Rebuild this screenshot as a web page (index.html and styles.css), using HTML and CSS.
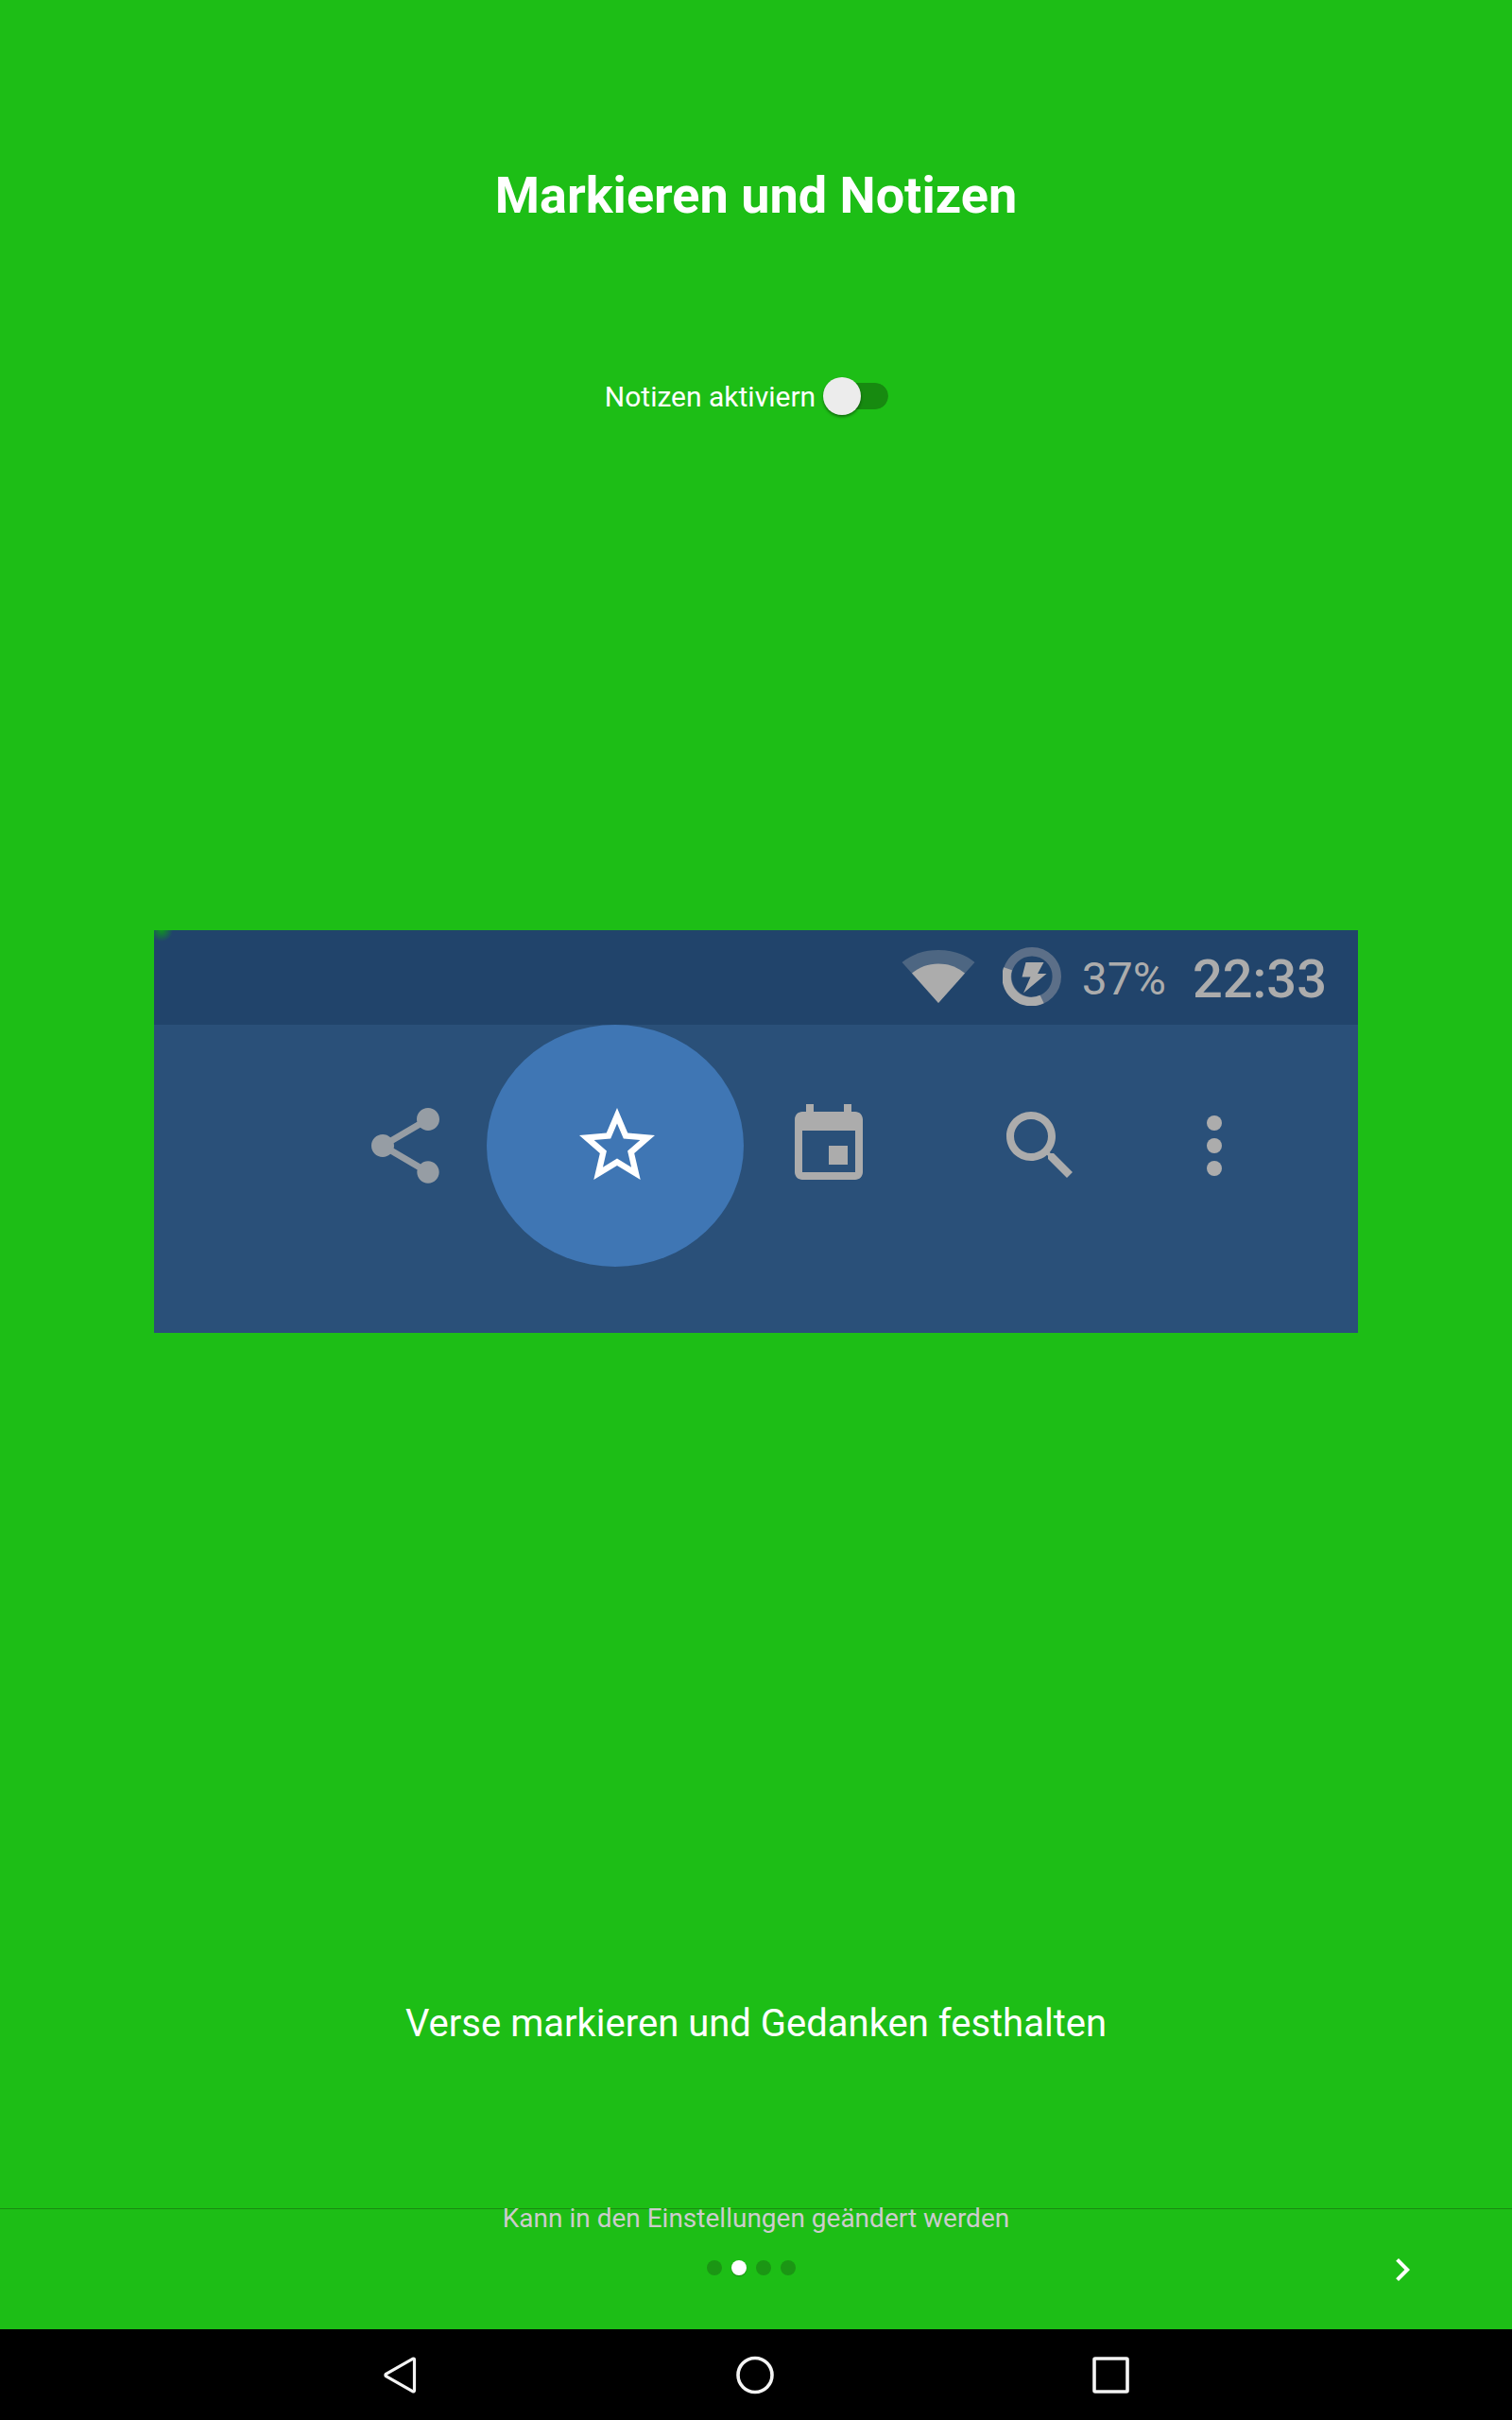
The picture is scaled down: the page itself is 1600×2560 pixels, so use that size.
FILE: index.html
```html
<!DOCTYPE html>
<html lang="de">
<head>
<meta charset="utf-8">
<meta name="viewport" content="width=device-width, initial-scale=1">
<title>Markieren und Notizen</title>
<link rel="stylesheet" href="styles.css">
</head>
<body>
<main class="slide">
  <h1 class="title">Markieren und Notizen</h1>
  <label class="toggle" for="notes">
    <span class="toggle-text">Notizen aktiviern</span>
    <input class="switch" id="notes" type="checkbox" role="switch">
  </label>
  <div class="stage">
    <section class="preview" aria-label="Vorschau">
      <div class="status">
        <svg class="wifi" width="78" height="58" viewBox="0 0 78 58" aria-hidden="true">
          <path fill="#4d6682" d="M39 57 .5 14C11 5.500 24 1 39 1s28 4.500 38.500 13z"/>
          <path fill="#acacac" d="M39 57 11 25.500C19 19 28 15.500 39 15.500S59 19 67 25.500z"/>
        </svg>
        <svg class="battery" width="62" height="62" viewBox="0 0 62 62" aria-hidden="true">
          <circle cx="31" cy="31" r="26.300" fill="none" stroke="#5c6f88" stroke-width="9.400"/>
          <path fill="none" stroke="#acacac" stroke-width="9.400" d="M5.500 22.800A26.300 26.300 0 0 0 41.600 55.100"/>
          <path fill="#acacac" d="M24.500 16H43.500L37 28H46.500L22 48.500 29.500 31.500H20.500z"/>
        </svg>
        <span class="percent">37%</span>
        <span class="clock">22:33</span>
      </div>
      <div class="toolbar">
        <svg class="icon share" viewBox="0 0 24 24" aria-hidden="true"><path d="M18 16.080c-.76 0-1.440.3-1.960.77L8.910 12.700c.05-.23.09-.46.09-.7s-.04-.47-.09-.7l7.050-4.110c.54.5 1.250.81 2.040.81 1.660 0 3-1.340 3-3s-1.340-3-3-3-3 1.340-3 3c0 .24.04.47.09.7L8.040 9.810C7.500 9.310 6.790 9 6 9c-1.660 0-3 1.340-3 3s1.340 3 3 3c.79 0 1.500-.31 2.040-.81l7.120 4.160c-.05.21-.08.43-.08.65 0 1.610 1.310 2.920 2.920 2.920s2.920-1.310 2.920-2.920-1.310-2.920-2.920-2.920z"/></svg>
        <span class="spot">
          <svg class="icon star" viewBox="0 0 24 24" aria-hidden="true"><path d="M22 9.240l-7.190-.62L12 2 9.190 8.630 2 9.240l5.460 4.730L5.820 21 12 17.270 18.180 21l-1.630-7.030L22 9.240zM12 15.400l-3.760 2.270 1-4.280-3.320-2.880 4.380-.38L12 6.100l1.710 4.040 4.380.38-3.320 2.880 1 4.280L12 15.400z"/></svg>
        </span>
        <svg class="icon" viewBox="0 0 24 24" aria-hidden="true"><path d="M17 12h-5v5h5v-5zM16 1v2H8V1H6v2H5c-1.110 0-1.990.9-1.990 2L3 19c0 1.100.89 2 2 2h14c1.100 0 2-.9 2-2V5c0-1.100-.9-2-2-2h-1V1h-2zm3 18H5V8h14v11z"/></svg>
        <svg class="icon" viewBox="0 0 24 24" aria-hidden="true"><path d="M15.500 14h-.79l-.28-.27C15.410 12.590 16 11.110 16 9.500 16 5.910 13.090 3 9.500 3S3 5.910 3 9.500 5.910 16 9.500 16c1.610 0 3.090-.59 4.230-1.570l.27.28v.79l5 4.990L20.490 19l-4.990-5zm-6 0C7.010 14 5 11.990 5 9.500S7.010 5 9.500 5 14 7.010 14 9.500 11.990 14 9.500 14z"/></svg>
        <svg class="icon more" viewBox="0 0 24 24" aria-hidden="true"><circle cx="12" cy="6" r="2"/><circle cx="12" cy="12" r="2"/><circle cx="12" cy="18" r="2"/></svg>
      </div>
    </section>
  </div>
  <p class="lead">Verse markieren und Gedanken festhalten</p>
</main>
<footer class="pager">
  <p class="note">Kann in den Einstellungen geändert werden</p>
  <div class="controls">
    <span class="dots"><i class="dot"></i><i class="dot current"></i><i class="dot"></i><i class="dot"></i></span>
    <button class="next" type="button" aria-label="Weiter"><svg width="48" height="48" viewBox="0 0 24 24" aria-hidden="true"><path fill="#fff" d="M10 6 8.590 7.410 13.170 12l-4.580 4.590L10 18l6-6z"/></svg></button>
  </div>
</footer>
<nav class="system" aria-label="System">
  <button type="button" aria-label="Zurück"><svg width="48" height="48" viewBox="0 0 48 48"><path stroke-width="3.200" d="M38.500 8v33a1 1 0 0 1-1.500.8L8.500 25.700a1.500 1.500 0 0 1 0-2.400L37 7.200a1 1 0 0 1 1.500.8z"/></svg></button>
  <button type="button" aria-label="Startseite"><svg width="48" height="48" viewBox="0 0 48 48"><circle cx="23" cy="24.500" r="18" stroke-width="3.600"/></svg></button>
  <button type="button" aria-label="Übersicht"><svg width="48" height="48" viewBox="0 0 48 48"><rect x="6" y="7" width="35" height="35" rx="1" stroke-width="3.600"/></svg></button>
</nav>
</body>
</html>
```
FILE: styles.css
```css
* { box-sizing: border-box; }

body {
  display: flex;
  flex-direction: column;
  min-height: 100vh;
  margin: 0;
  background: #1dbe16;
  color: #fff;
  font-family: Roboto, "Liberation Sans", sans-serif;
}

h1, p { margin: 0; }

button {
  padding: 0;
  border: 0;
  background: none;
}

svg { display: block; flex: none; }

.slide {
  display: flex;
  flex: 1;
  flex-direction: column;
  align-items: center;
  padding-top: 172px;
}

.title {
  font-size: 54px;
  font-weight: 700;
  line-height: 70px;
}

.toggle {
  display: flex;
  align-items: center;
  gap: 8px;
  margin-top: 155px;
  margin-right: 20px;
  font-size: 30px;
  line-height: 42px;
}

.toggle-text { padding-top: 2px; }

.switch {
  display: flex;
  align-items: center;
  width: 69px;
  height: 28px;
  margin: 0;
  border-left: 8px solid transparent;
  border-radius: 14px;
  appearance: none;
  background: #178a10;
  background-clip: padding-box;
}

.switch::before {
  content: "";
  flex: none;
  width: 40px;
  height: 40px;
  margin-left: -8px;
  border-radius: 50%;
  background: #ececec;
  box-shadow: 0 2px 3px rgba(0, 0, 0, .4);
}

.switch:checked { justify-content: flex-end; }

.stage {
  display: flex;
  flex: 1;
  align-items: center;
  align-self: stretch;
  padding: 0 163px 164px;
}

.preview {
  flex: 1;
  background: #2a5079;
}

.status {
  display: flex;
  align-items: center;
  justify-content: flex-end;
  height: 100px;
  padding-right: 33px;
  background: radial-gradient(circle at 8px 0, #0f9422 0, #21446b 12px);
  color: #acacac;
}

.wifi, .battery { margin-bottom: 2px; }

.battery { margin-left: 29px; }

.percent {
  margin-left: 22px;
  padding-top: 4px;
  font-size: 48px;
  line-height: 96px;
}

.clock {
  margin-left: 28px;
  padding-top: 4px;
  font-size: 56px;
  font-weight: 500;
  line-height: 96px;
}

.toolbar {
  display: flex;
  align-items: center;
  justify-content: flex-end;
  height: 326px;
  padding: 0 104px 70px 0;
}

.icon {
  width: 96px;
  height: 96px;
  margin-right: 128px;
  fill: #acacac;
}

.share {
  margin-right: 38px;
  fill: #969da4;
}

.spot {
  display: flex;
  align-items: center;
  justify-content: center;
  width: 272px;
  height: 256px;
  margin-right: 42px;
  padding-left: 4px;
  border-radius: 50%;
  background: #3f76b4;
}

.star {
  margin-right: 0;
  fill: #fff;
}

.icon:nth-last-child(2) { margin-right: 88px; }

.more { margin-right: 0; }

.lead {
  font-size: 40px;
  line-height: 48px;
}

.pager {
  margin-top: 171px;
  border-top: 1px solid #188a10;
}

.note {
  margin-top: -8px;
  color: #ccc;
  font-size: 28px;
  line-height: 36px;
  text-align: center;
}

.controls {
  display: grid;
  grid-template-columns: 1fr auto 1fr;
  align-items: center;
  height: 99px;
  padding: 0 92px 28px;
}

.dots {
  display: flex;
  grid-column: 2;
  gap: 10px;
  margin-right: 10px;
  padding-bottom: 3px;
}

.dot {
  width: 16px;
  height: 16px;
  border-radius: 50%;
  background: #1b9614;
}

.current {
  background: #fff;
  box-shadow: 0 1px 1px #188a10;
}

.next { justify-self: end; }

.system {
  display: grid;
  grid-template-columns: repeat(3, 48px);
  align-items: center;
  justify-content: center;
  gap: 328px;
  height: 96px;
  background: #000;
}

.system svg {
  fill: none;
  stroke: #f4f4f4;
}
```
